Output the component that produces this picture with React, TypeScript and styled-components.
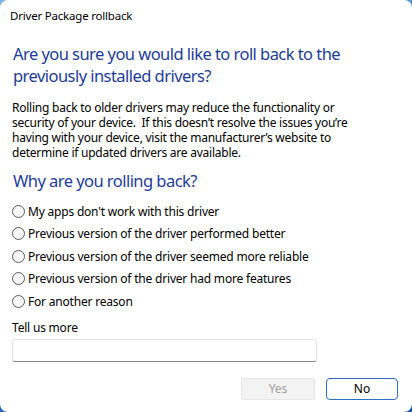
import React from "react";
import styled, { createGlobalStyle } from "styled-components";

const Global = createGlobalStyle`
  html, body { margin: 0; padding: 0; }
  body {
    width: 412px;
    height: 412px;
    overflow: hidden;
    background: linear-gradient(160deg, #7fb0e6 0%, #3a7fd0 50%, #1652ad 100%);
    font-family: "Noto Sans", "Open Sans", sans-serif;
  }
`;

const Window = styled.div`
  width: 412px;
  height: 412px;
  box-sizing: border-box;
  background: #ffffff;
  border-radius: 8px;
  display: flex;
  flex-direction: column;
  color: #000;
`;

const TitleBar = styled.div`
  height: 16px;
  line-height: 16px;
  padding: 8px 10px 0;
  font-size: 11.5px;
  letter-spacing: -0.2px;
`;

const Content = styled.div`
  padding: 0 12px 0 12px;
  display: flex;
  flex-direction: column;
  flex: 1;
`;

const Heading = styled.h1<{ $top: number }>`
  margin: ${(p) => p.$top}px 0 0 1px;
  font-weight: 400;
  font-size: 16.5px;
  letter-spacing: -0.55px;
  line-height: 22px;
  color: #1d3c97;
  max-width: 340px;
`;

const Body = styled.p`
  margin: 13px 0 0;
  font-size: 12px;
  letter-spacing: -0.24px;
  line-height: 15px;
  max-width: 340px;
`;

const RadioList = styled.div`
  margin-top: 8px;
  display: flex;
  flex-direction: column;
`;

const RadioRow = styled.label`
  height: 22.5px;
  display: flex;
  align-items: center;
  gap: 3px;
  font-size: 12px;
  letter-spacing: -0.2px;
`;

const Circle = styled.span`
  width: 11px;
  height: 11px;
  border-radius: 50%;
  border: 1px solid #5a5a5a;
  background: #f7f7f7;
  flex: none;
`;

const Label = styled.div`
  margin-top: 7px;
  font-size: 12px;
  letter-spacing: -0.2px;
  line-height: 16px;
`;

const Input = styled.div`
  margin-top: 3px;
  width: 305px;
  height: 23px;
  box-sizing: border-box;
  border: 1px solid #e5e5e5;
  border-bottom: 1px solid #868686;
  border-radius: 3px;
  background: #fff;
`;

const Footer = styled.div`
  margin-top: 16px;
  display: flex;
  justify-content: flex-end;
  gap: 11px;
  padding-right: 2px;
`;

const Button = styled.button<{ $primary?: boolean }>`
  width: ${(p) => (p.$primary ? 72 : 74)}px;
  height: 22px;
  box-sizing: border-box;
  font-family: inherit;
  font-size: 12px;
  padding: 0;
  border-radius: ${(p) => (p.$primary ? 4 : 2)}px;
  border: 1px solid ${(p) => (p.$primary ? "#2a6fc0" : "#e6e6e6")};
  background: ${(p) => (p.$primary ? "#ffffff" : "#f3f3f3")};
  color: ${(p) => (p.$primary ? "#000" : "#a0a0a0")};
`;

const reasons = [
  "My apps don't work with this driver",
  "Previous version of the driver performed better",
  "Previous version of the driver seemed more reliable",
  "Previous version of the driver had more features",
  "For another reason",
];

export default function App() {
  return (
    <>
      <Global />
      <Window>
        <TitleBar>Driver Package rollback</TitleBar>
        <Content>
          <Heading $top={19}>
            Are you sure you would like to roll back to the previously installed drivers?
          </Heading>
          <Body>
            Rolling back to older drivers may reduce the functionality or security of your device.&nbsp; If this doesn’t resolve the issues you’re having with your device, visit the manufacturer’s website to determine if updated drivers are available.
          </Body>
          <Heading $top={10}>Why are you rolling back?</Heading>
          <RadioList>
            {reasons.map((r) => (
              <RadioRow key={r}>
                <Circle />
                {r}
              </RadioRow>
            ))}
          </RadioList>
          <Label>Tell us more</Label>
          <Input />
          <Footer>
            <Button disabled>Yes</Button>
            <Button $primary>No</Button>
          </Footer>
        </Content>
      </Window>
    </>
  );
}
